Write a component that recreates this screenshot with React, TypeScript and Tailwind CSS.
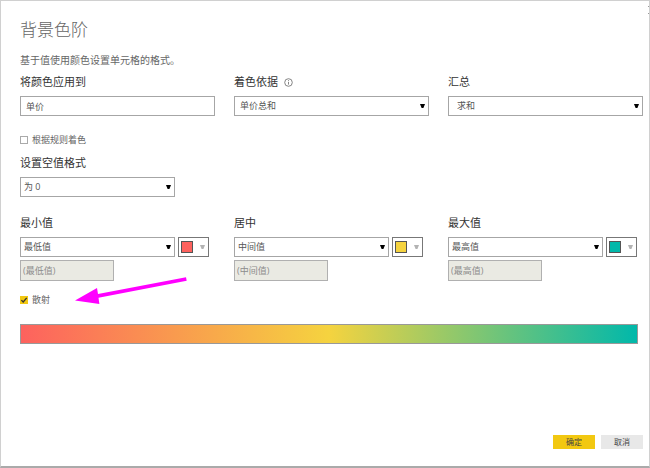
import { useState } from "react";
import type { ReactNode } from "react";

const field =
  "block h-5 w-full appearance-none rounded-none border border-[#a6a6a6] bg-white text-[9px] leading-4 text-[#555] outline-none";

function Label({ htmlFor, children }: { htmlFor: string; children: ReactNode }) {
  return (
    <label htmlFor={htmlFor} className="mb-1.5 block text-[11px] leading-4 text-[#333]">
      {children}
    </label>
  );
}

function Caret({ className }: { className: string }) {
  return (
    <svg viewBox="0 0 5 4" className={`pointer-events-none absolute h-1 w-[5px] ${className}`} aria-hidden="true">
      <path d="M0 0h5L3.4 4H1.6z" fill="currentColor" />
    </svg>
  );
}

function Select({ id, value, pad = "pl-[3px]" }: { id: string; value: string; pad?: string }) {
  return (
    <div className="relative min-w-0 flex-1">
      <select id={id} className={`${field} ${pad}`}>
        <option>{value}</option>
      </select>
      <Caret className="right-1 top-2 text-black" />
    </div>
  );
}

function Stop({ id, title, value, swatch }: { id: string; title: string; value: string; swatch: string }) {
  return (
    <div>
      <Label htmlFor={id}>{title}</Label>
      <div className="mr-[6px] flex gap-[3px]">
        <Select id={id} value={value} />
        <button type="button" aria-label={`${title} 颜色`} className="relative h-5 w-[31px] border border-[#777] bg-white">
          <span className={`absolute left-[2px] top-[3px] size-3 border border-[#555] ${swatch}`} />
          <Caret className="right-[3px] top-[7px] text-[#b3b3b3]" />
        </button>
      </div>
      <input
        type="text"
        disabled
        aria-label={`${title} 数值`}
        placeholder={`(${value})`}
        className="mt-[3px] block h-[21px] w-[94px] border border-[#b0b0b0] bg-[#eaeae3] pl-[2px] text-[9px] leading-4 placeholder:text-[#8c8c8c]"
      />
    </div>
  );
}

function Check({
  id,
  label,
  checked,
  onChange,
}: {
  id: string;
  label: string;
  checked: boolean;
  onChange: (v: boolean) => void;
}) {
  return (
    <label htmlFor={id} className="flex h-4 w-fit items-center gap-1 text-[9px] leading-4 text-[#666]">
      <span className="relative block size-2">
        <input
          id={id}
          type="checkbox"
          checked={checked}
          onChange={(e) => onChange(e.target.checked)}
          className="block size-2 appearance-none border border-[#aaa] bg-white checked:border-[#f2c811] checked:bg-[#f2c811]"
        />
        {checked && (
          <svg viewBox="0 0 8 8" className="pointer-events-none absolute inset-0 size-2" aria-hidden="true">
            <path d="M1.4 4.1 3.2 6 6.7 1.8" fill="none" stroke="#333" strokeWidth="1.3" />
          </svg>
        )}
      </span>
      {label}
    </label>
  );
}

export default function App() {
  const [rules, setRules] = useState(false);
  const [diverging, setDiverging] = useState(true);

  return (
    <main className="relative flex min-h-screen flex-col overflow-hidden border border-b-2 border-[#d0d0d0] border-b-[#aaa] bg-white pb-[17px] pl-[19px] pr-1.5 pt-4 font-['Open_Sans','Noto_Sans_CJK_SC',sans-serif]">
      <button type="button" aria-label="关闭" className="absolute -right-2 top-1 size-2.5 text-[#999]">
        <svg viewBox="0 0 10 10" className="size-2.5" aria-hidden="true">
          <path d="M1 1l8 8M9 1l-8 8" stroke="currentColor" fill="none" />
        </svg>
      </button>

      <h1 className="font-['Noto_Sans_CJK_SC',sans-serif] text-[17px] font-light leading-6 text-[#666]">背景色阶</h1>
      <p className="mt-[11px] text-[10px] leading-4 text-[#666]">基于值使用颜色设置单元格的格式。</p>

      <div className="mt-1.5 grid grid-cols-3 gap-x-[19px]">
        <div>
          <Label htmlFor="apply">将颜色应用到</Label>
          <input id="apply" type="text" readOnly value="单价" className={`${field} pl-[5px]`} />
        </div>
        <div>
          <Label htmlFor="based">
            <span className="flex items-center gap-1.5">
              着色依据
              <svg viewBox="0 0 9 9" className="size-[9px]" fill="none" stroke="#777" aria-hidden="true">
                <circle cx="4.5" cy="4.5" r="3.8" strokeWidth=".9" />
                <path d="M4.5 4v2.6M4.5 2.2v1" strokeWidth=".9" />
              </svg>
            </span>
          </Label>
          <Select id="based" value="单价总和" pad="pl-[5px]" />
        </div>
        <div>
          <Label htmlFor="summary">汇总</Label>
          <Select id="summary" value="求和" pad="pl-2" />
        </div>
      </div>

      <div className="mt-4">
        <Check id="rules" label="根据规则着色" checked={rules} onChange={setRules} />
      </div>

      <div className="mt-[7px] w-[155px]">
        <Label htmlFor="blank">设置空值格式</Label>
        <Select id="blank" value="为 0" />
      </div>

      <div className="mt-[18px] grid grid-cols-3 gap-x-[19px]">
        <Stop id="min" title="最小值" value="最低值" swatch="bg-[#fd625e]" />
        <Stop id="mid" title="居中" value="中间值" swatch="bg-[#f5d33f]" />
        <Stop id="max" title="最大值" value="最高值" swatch="bg-[#01b8aa]" />
      </div>

      <div className="relative mt-[11px]">
        <Check id="diverging" label="散射" checked={diverging} onChange={setDiverging} />
        <svg viewBox="0 0 112 28" className="pointer-events-none absolute -top-4 left-[55px] h-7 w-28" aria-hidden="true">
          <path d="M0 24.5 22 12l1 6.1L111 1.3l.7 3.5L23.5 21.7l.9 6.3z" fill="#ff00ff" />
        </svg>
      </div>

      <div className="mr-[5px] mt-4 h-5 border border-[#999] bg-linear-to-r/srgb from-[#fd625e] via-[#f5d33f] to-[#01b8aa]" />

      <div className="mt-auto flex justify-end gap-1.5 text-[8px] leading-[14px] text-[#444]">
        <button type="button" className="h-3.5 w-[42px] bg-[#f2c811]">
          确定
        </button>
        <button type="button" className="h-3.5 w-[42px] bg-[#e8e8e8]">
          取消
        </button>
      </div>
    </main>
  );
}
